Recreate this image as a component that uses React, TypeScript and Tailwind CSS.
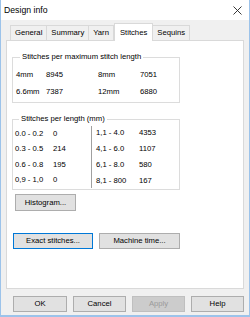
const font = { fontFamily: '"Liberation Sans", Arial, sans-serif' };

const tabs = ["General", "Summary", "Yarn", "Stitches", "Sequins"];

const maxRows = [
  ["4mm", "8945", "8mm", "7051"],
  ["6.6mm", "7387", "12mm", "6880"],
];

const lengthRows = [
  ["0.0 - 0.2", "0", "1,1 - 4.0", "4353"],
  ["0.3 - 0.5", "214", "4,1 - 6.0", "1107"],
  ["0.6 - 0.8", "195", "6,1 - 8.0", "580"],
  ["0,9 - 1,0", "0", "8,1 - 800", "167"],
];

const Button = ({
  label,
  className = "",
  focused = false,
  disabled = false,
}: {
  label: string;
  className?: string;
  focused?: boolean;
  disabled?: boolean;
}) => (
  <button
    className={
      "flex items-center justify-center border text-[7.7px] leading-none " +
      (disabled
        ? "bg-[#cccccc] border-[#bfbfbf] text-[#9a9a9a] "
        : focused
        ? "bg-[#e1e1e1] border-[#0078d7] text-black "
        : "bg-[#e1e1e1] border-[#adadad] text-black ") +
      className
    }
  >
    {label}
  </button>
);

export default function App() {
  return (
    <div
      className="w-[250px] h-[317px] flex flex-col border-x border-b-2 border-[#9cc3ea] bg-white text-black"
      style={font}
    >
      {/* title bar */}
      <div className="h-[20px] flex items-center justify-between pl-[3px] pr-[7px] bg-white">
        <span className="text-[8.7px] leading-none">Design info</span>
        <svg width="9" height="9" viewBox="0 0 9 9">
          <path d="M0.5 0.5 L8.5 8.5 M8.5 0.5 L0.5 8.5" stroke="#222" strokeWidth="0.9" />
        </svg>
      </div>

      <div className="flex-1 flex flex-col bg-[#f0f0f0] px-[5px] pt-[2px]">
        {/* tabs */}
        <div className="h-[18px] flex items-end pl-[4px]">
          {tabs.map((t) =>
            t === "Stitches" ? (
              <div
                key={t}
                className="h-[18px] px-[5px] -mb-px relative z-10 flex items-center bg-white border border-b-0 border-[#d9d9d9] text-[7.7px]"
              >
                {t}
              </div>
            ) : (
              <div
                key={t}
                className="h-[15px] px-[4px] flex items-center bg-[#f0f0f0] border border-b-0 border-l-0 first:border-l border-[#d9d9d9] text-[7.7px]"
              >
                {t}
              </div>
            )
          )}
        </div>

        {/* tab page */}
        <div className="h-[249px] bg-white border border-[#d9d9d9] pl-[5px] pt-[11px] text-[7.7px]">
          <fieldset className="w-[168px] border border-[#dcdcdc] px-[3px] pt-[4px] pb-[2px]">
            <legend className="ml-[4px] px-[2px] leading-[10px]">Stitches per maximum stitch length</legend>
            {maxRows.map((r) => (
              <div key={r[0]} className="h-[17px] grid grid-cols-[30px_52px_42px_1fr] items-center">
                <span>{r[0]}</span>
                <span>{r[1]}</span>
                <span>{r[2]}</span>
                <span>{r[3]}</span>
              </div>
            ))}
          </fieldset>

          <fieldset className="w-[168px] mt-[11px] border border-[#dcdcdc] pl-[2px] pt-[1px]">
            <legend className="ml-[4px] px-[2px] leading-[10px]">Stitches per length (mm)</legend>
            <div className="flex">
              <div className="w-[77px] border-r border-[#a0a0a0] my-[1px]">
                {lengthRows.map((r) => (
                  <div key={r[0]} className="h-[16px] -my-[0.5px] grid grid-cols-[38px_1fr] items-center">
                    <span>{r[0]}</span>
                    <span>{r[1]}</span>
                  </div>
                ))}
              </div>
              <div className="pl-[4px]">
                {lengthRows.map((r) => (
                  <div key={r[2]} className="h-[16px] grid grid-cols-[43px_1fr] items-center">
                    <span>{r[2]}</span>
                    <span>{r[3]}</span>
                  </div>
                ))}
              </div>
            </div>
          </fieldset>

          <Button label="Histogram..." className="w-[61px] h-[17px] ml-[3px] mt-[4px]" />

          <div className="flex gap-[6px] mt-[22px] ml-[1px]">
            <Button label="Exact stitches..." focused className="w-[80px] h-[16px]" />
            <Button label="Machine time..." className="w-[81px] h-[16px]" />
          </div>
        </div>

        {/* dialog buttons */}
        <div className="flex gap-[6px] mt-[7px] pl-[7px]">
          <Button label="OK" className="w-[54px] h-[16px]" />
          <Button label="Cancel" className="w-[53px] h-[16px]" />
          <Button label="Apply" disabled className="w-[53px] h-[16px]" />
          <Button label="Help" className="w-[53px] h-[16px]" />
        </div>
      </div>
    </div>
  );
}
